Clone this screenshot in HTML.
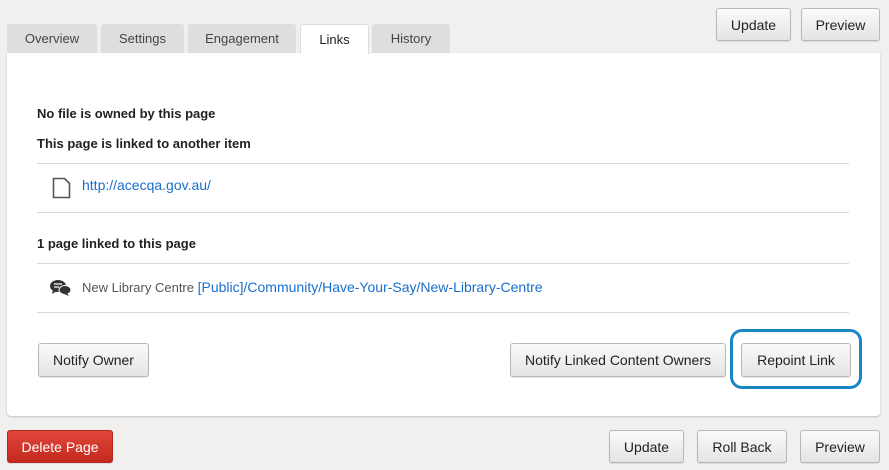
<!DOCTYPE html><html><head><style>
body{margin:0;width:889px;height:470px;background:#f1f0ef;font-family:"Liberation Sans",sans-serif;position:relative;overflow:hidden}
.a{position:absolute}
.btn{position:absolute;box-sizing:border-box;border:1px solid #b8b8b8;border-radius:3px;background:linear-gradient(#fafafa,#e4e4e4);font-size:14px;color:#222;display:flex;align-items:center;justify-content:center;box-shadow:0 1px 1px rgba(0,0,0,.1)}
.tab{position:absolute;top:24px;height:29px;box-sizing:border-box;background:#dedede;border-radius:3px 3px 0 0;font-size:13px;color:#444;display:flex;align-items:center;justify-content:center}
.panel{position:absolute;left:7px;top:53px;width:873px;height:363px;background:#fff;border-radius:0 0 4px 4px;box-shadow:0 1px 2px rgba(0,0,0,.2)}
.hr{position:absolute;left:37px;width:812px;height:1px;background:#d8d8d8}
b{position:absolute;font-size:13px;color:#222}
a{color:#1a6fce;text-decoration:none}
</style></head><body>
<div class="btn" style="left:716px;top:8px;width:75px;height:33px">Update</div>
<div class="btn" style="left:801px;top:8px;width:79px;height:33px">Preview</div>
<div class="tab" style="left:7px;width:90px">Overview</div>
<div class="tab" style="left:101px;width:83px">Settings</div>
<div class="tab" style="left:188px;width:108px">Engagement</div>
<div class="tab" style="left:300px;width:69px;background:#fff;color:#222;border:1px solid #ddd;border-bottom:none;height:30px;z-index:2">Links</div>
<div class="tab" style="left:372px;width:78px">History</div>
<div class="panel"></div>
<b style="left:37px;top:106px">No file is owned by this page</b>
<b style="left:37px;top:136px">This page is linked to another item</b>
<div class="hr" style="top:163px"></div>
<svg class="a" style="left:52px;top:177px" width="19" height="22"><path d="M1.5 1.5h11l5 5v14h-16z" fill="#fff" stroke="#555" stroke-width="1.6"/></svg>
<a class="a" style="left:82px;top:177px;font-size:14px">http://acecqa.gov.au/</a>
<div class="hr" style="top:212px"></div>
<b style="left:37px;top:236px">1 page linked to this page</b>
<div class="hr" style="top:263px"></div>
<svg class="a" style="left:50px;top:279px" width="22" height="18"><ellipse cx="8" cy="7" rx="8" ry="6" fill="#333"/><path d="M3 11l-1 4 5-3z" fill="#333"/><ellipse cx="15" cy="11" rx="6" ry="4.5" fill="#333" stroke="#fff" stroke-width="1"/><path d="M17 14l2 3-5-2z" fill="#333"/><path d="M4 5h8M4 8h5" stroke="#fff" stroke-width="1.2"/></svg>
<div class="a" style="left:82px;top:279px;font-size:13px;color:#555">New Library Centre <a style="font-size:14px">[Public]/Community/Have-Your-Say/New-Library-Centre</a></div>
<div class="hr" style="top:312px"></div>
<div class="btn" style="left:38px;top:343px;width:111px;height:34px">Notify Owner</div>
<div class="btn" style="left:510px;top:343px;width:216px;height:34px">Notify Linked Content Owners</div>
<div class="a" style="left:730px;top:329px;width:126px;height:54px;border:3px solid #1a86c4;border-radius:12px"></div>
<div class="btn" style="left:741px;top:343px;width:110px;height:34px">Repoint Link</div>
<div class="btn" style="left:7px;top:430px;width:106px;height:33px;background:linear-gradient(#e0463a,#c4291e);border-color:#b02a20;color:#fff">Delete Page</div>
<div class="btn" style="left:609px;top:430px;width:75px;height:33px">Update</div>
<div class="btn" style="left:697px;top:430px;width:90px;height:33px">Roll Back</div>
<div class="btn" style="left:800px;top:430px;width:80px;height:33px">Preview</div>
</body></html>
